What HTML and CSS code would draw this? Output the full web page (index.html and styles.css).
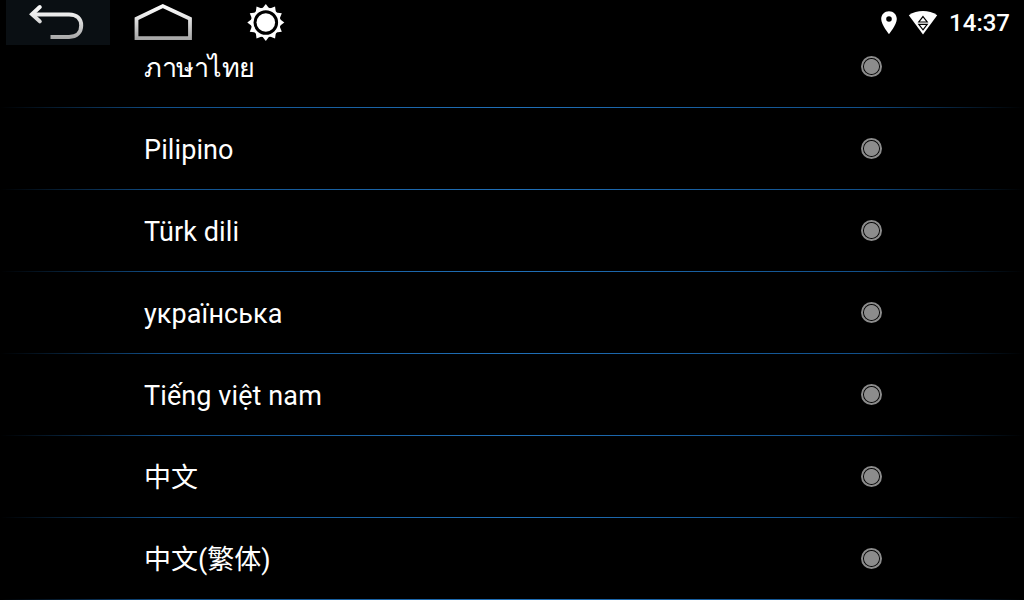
FILE: index.html
```html
<!DOCTYPE html>
<html lang="en">
<head>
    <meta charset="UTF-8">
    <meta name="viewport" content="width=device-width, initial-scale=1.0">
    <title>Language</title>
    <link rel="stylesheet" href="styles.css">
</head>
<body>
    <header class="status-bar">
        <div class="nav-button back">
            <svg width="104" height="45" viewBox="6 0 104 45" fill="none">
                <defs>
                    <linearGradient id="metal" gradientUnits="userSpaceOnUse" x1="0" y1="4" x2="0" y2="40">
                        <stop offset="0" stop-color="#ffffff"/>
                        <stop offset="0.35" stop-color="#e8e8e8"/>
                        <stop offset="1" stop-color="#a4a4a4"/>
                    </linearGradient>
                </defs>
                <path d="M33 14.4H69C77 14.4 81.2 19 81.2 25.5C81.2 32 77 36.9 69 36.9H50.5" stroke="url(#metal)" stroke-width="4"/>
                <path d="M39.8 7L32 14.2L39.8 21.4" stroke="url(#metal)" stroke-width="4" stroke-linecap="round"/>
            </svg>
        </div>
        <div class="nav-button home">
            <svg width="60" height="45" viewBox="133 0 60 45" fill="none">
                <path d="M136.5 38.2V18.8L162.8 6L190 18.8V38.2Z" stroke="url(#metal)" stroke-width="3.8"/>
            </svg>
        </div>
        <div class="nav-button brightness">
            <svg id="sun" width="38" height="45" viewBox="247 0 38 45">
                <circle cx="265.8" cy="22.5" r="13.6" fill="none" stroke="#fff" stroke-width="2.6"/>
                <circle cx="265.8" cy="22.5" r="9.3" fill="#fff"/>
            </svg>
        </div>
        <div class="indicators">
            <svg class="pin" width="16" height="24" viewBox="0 0 16 24">
                <path fill="#fff" fill-rule="evenodd" d="M8 .2C3.6.2.2 3.6.2 7.9C.2 13.5 8 23 8 23S15.8 13.5 15.8 7.9C15.8 3.6 12.4.2 8 .2ZM8 5.2A2.8 2.8 0 1 1 8 10.8A2.8 2.8 0 1 1 8 5.2Z"/>
            </svg>
            <svg class="wifi" width="30" height="24" viewBox="0 0 30 24">
                <path fill="#fff" d="M.8 4.2C9 -1.4 21 -1.4 29.2 4.2L15 23.6Z"/>
                <path fill="none" stroke="#000" stroke-width="1.2" d="M15 5.6L19.2 11H10.8ZM15 18.8L19.2 13.4H10.8Z"/>
            </svg>
            <span class="clock">14:37</span>
        </div>
    </header>
    <ul class="languages">
        <li><span class="thai">ภาษาไทย</span><i class="radio"></i></li>
        <li><span>Pilipino</span><i class="radio"></i></li>
        <li><span>Türk dili</span><i class="radio"></i></li>
        <li><span>українська</span><i class="radio"></i></li>
        <li><span>Tiếng việt nam</span><i class="radio"></i></li>
        <li><span class="cjk">中文</span><i class="radio"></i></li>
        <li><span class="cjk">中文(繁体)</span><i class="radio"></i></li>
    </ul>
    <script>
        // twelve rays around the sun
        const sun = document.getElementById('sun');
        for (let i = 0; i < 12; i++) {
            const ray = document.createElementNS('http://www.w3.org/2000/svg', 'path');
            ray.setAttribute('d', 'M262 8.9L265.8 4L269.6 8.9Z');
            ray.setAttribute('fill', '#fff');
            ray.setAttribute('transform', `rotate(${i * 30} 265.8 22.5)`);
            sun.appendChild(ray);
        }
    </script>
</body>
</html>
```
FILE: styles.css
```css
body, html {
    margin: 0;
    padding: 0;
    height: 100%;
    overflow: hidden;
    background: #000;
    color: #fff;
    font-family: Roboto, "Noto Sans", "Noto Sans CJK SC", sans-serif;
}
body {
    display: flex;
    flex-direction: column;
}
svg {
    display: block;
}
.status-bar {
    display: flex;
    flex: none;
    height: 45px;
    padding: 0 14px 0 6px;
}
.back {
    background: #0a0f13;
}
.home {
    margin-left: 23px;
}
.brightness {
    margin-left: 54px;
}
.indicators {
    display: flex;
    align-items: center;
    margin-left: auto;
}
.pin {
    margin-right: 11px;
}
.wifi {
    margin-right: 11px;
}
.clock {
    padding-top: 2px;
    font-size: 24px;
    font-weight: 500;
    line-height: 47px;
}
.languages {
    flex: none;
    margin: 0;
    padding: 0;
    list-style: none;
}
.languages li {
    display: flex;
    align-items: center;
    justify-content: space-between;
    box-sizing: border-box;
    height: 82px;
    padding: 0 142px 1px 144px;
    font-size: 27px;
    line-height: 36px;
    letter-spacing: 0.1px;
    background: linear-gradient(to right, transparent, #11508b 16%, #2070b8 50%, #11508b 84%, transparent) bottom / 100% 1px no-repeat;
}
.languages li span {
    padding-top: 2px;
}
.languages li .cjk {
    letter-spacing: 0;
}
.languages li:first-child {
    height: 63px;
    padding-bottom: 20px;
}
.languages li .thai {
    letter-spacing: -0.45px;
}
.radio {
    box-sizing: border-box;
    width: 21px;
    height: 21px;
    border: 2px solid #8c8c8c;
    border-radius: 50%;
    background: radial-gradient(circle, #8c8c8c 7px, #000 8px);
}
```
